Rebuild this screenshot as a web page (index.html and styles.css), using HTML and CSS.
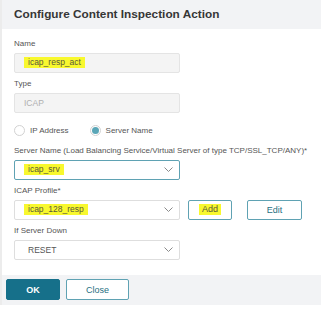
FILE: index.html
```html
<!DOCTYPE html>
<html lang="en">
<head>
    <meta charset="UTF-8">
    <title>Configure Content Inspection Action</title>
    <link rel="stylesheet" href="styles.css">
</head>
<body>
    <div class="dialog">
        <div class="dialog-header">
            <h1 class="dialog-title">Configure Content Inspection Action</h1>
        </div>

        <div class="dialog-body">
            <div class="field">
                <label class="field-label">Name</label>
                <div class="input input-disabled"><span class="value hl">icap_resp_act</span></div>
            </div>

            <div class="field">
                <label class="field-label">Type</label>
                <div class="input input-disabled"><span class="value-muted">ICAP</span></div>
            </div>

            <div class="radio-row">
                <span class="radio-item"><span class="radio"></span>IP Address</span>
                <span class="radio-item"><span class="radio radio-checked"></span>Server Name</span>
            </div>

            <div class="field">
                <label class="field-label">Server Name (Load Balancing Service/Virtual Server of type TCP/SSL_TCP/ANY)*</label>
                <div class="input select select-focus">
                    <span class="value hl">icap_srv</span>
                    <svg class="chevron" width="9" height="5" viewBox="0 0 9 5"><path d="M0.5 0.5 L4.5 4.5 L8.5 0.5" fill="none" stroke="#8a8a8a" stroke-width="1"/></svg>
                </div>
            </div>

            <div class="field">
                <label class="field-label">ICAP Profile*</label>
                <div class="control-row">
                    <div class="input select">
                        <span class="value hl">icap_128_resp</span>
                        <svg class="chevron" width="9" height="5" viewBox="0 0 9 5"><path d="M0.5 0.5 L4.5 4.5 L8.5 0.5" fill="none" stroke="#8a8a8a" stroke-width="1"/></svg>
                    </div>
                    <button class="btn btn-add"><span class="hl hl-btn">Add</span></button>
                    <button class="btn btn-edit">Edit</button>
                </div>
            </div>

            <div class="field">
                <label class="field-label">If Server Down</label>
                <div class="input select">
                    <span class="value">RESET</span>
                    <svg class="chevron" width="9" height="5" viewBox="0 0 9 5"><path d="M0.5 0.5 L4.5 4.5 L8.5 0.5" fill="none" stroke="#8a8a8a" stroke-width="1"/></svg>
                </div>
            </div>
        </div>

        <div class="dialog-footer">
            <button class="btn btn-primary">OK</button>
            <button class="btn btn-close">Close</button>
        </div>
    </div>
</body>
</html>
```

FILE: styles.css
```css
* {
    margin: 0;
    padding: 0;
    box-sizing: border-box;
}

body {
    font-family: 'Liberation Sans', Arial, sans-serif;
    background: #ffffff;
    width: 321px;
    height: 310px;
    overflow: hidden;
}

.dialog {
    border-left: 2px solid #ececec;
    height: 305px;
    display: flex;
    flex-direction: column;
}

.dialog-header {
    height: 31px;
    background: #f2f3f5;
    padding-left: 12px;
    display: flex;
    align-items: center;
}

.dialog-title {
    font-size: 11.8px;
    font-weight: bold;
    color: #363636;
}

.dialog-body {
    padding: 9px 0 10px 12px;
}

.field {
    margin-bottom: 5px;
}

.field-label {
    display: block;
    font-size: 8px;
    line-height: 12px;
    height: 12px;
    margin-bottom: 3px;
    color: #555555;
    white-space: nowrap;
}

.input {
    width: 166px;
    height: 20px;
    border: 1px solid #dedede;
    border-radius: 2px;
    background: #ffffff;
    display: flex;
    align-items: center;
    padding-left: 9px;
    font-size: 8.5px;
    color: #555555;
}

.input-disabled {
    background: #f4f4f4;
    border-color: #e4e4e4;
}

.value {
    padding: 0 4px;
}

.value-muted {
    color: #b0b0b0;
}

.hl {
    background: #f8f82e;
    line-height: 11px;
    color: #5a5a3a;
}

.select {
    justify-content: space-between;
    padding-right: 6px;
}

.select-focus {
    border-color: #5fa2b3;
}

.chevron {
    display: block;
}

.radio-row {
    display: flex;
    align-items: center;
    height: 14px;
    margin: 11px 0 7px;
    font-size: 8px;
    color: #555555;
}

.radio-item {
    display: flex;
    align-items: center;
    margin-right: 21px;
}

.radio {
    width: 11px;
    height: 11px;
    border: 1px solid #d2d2d2;
    border-radius: 50%;
    margin-right: 5px;
    background: #ffffff;
    position: relative;
}

.radio-checked::after {
    content: "";
    position: absolute;
    top: 1px;
    left: 1px;
    width: 7px;
    height: 7px;
    border-radius: 50%;
    background: #5aa6b7;
}

.control-row {
    display: flex;
    align-items: center;
}

.btn {
    font-family: 'Liberation Sans', Arial, sans-serif;
    font-size: 9px;
    height: 20px;
    border: 1px solid #5fa2b3;
    border-radius: 2px;
    background: #ffffff;
    color: #1f6f82;
    display: flex;
    align-items: center;
    justify-content: center;
}

.btn-add {
    width: 44px;
    margin-left: 8px;
}

.hl-btn {
    padding: 0 3px;
}

.btn-edit {
    width: 55px;
    margin-left: 15px;
}

.dialog-footer {
    height: 33px;
    background: #f2f3f5;
    display: flex;
    align-items: center;
    padding-left: 4px;
    gap: 6px;
}

.btn-primary {
    width: 54px;
    height: 21px;
    background: #16708a;
    border-color: #16708a;
    color: #ffffff;
    font-weight: bold;
}

.btn-close {
    width: 63px;
    height: 21px;
}
```
